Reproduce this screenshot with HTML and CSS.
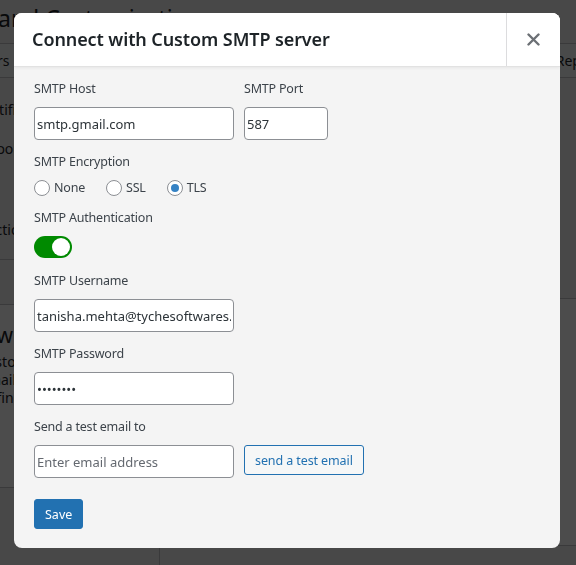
FILE: index.html
```html
<!DOCTYPE html>
<html lang="en">
<head>
    <meta charset="UTF-8">
    <meta name="viewport" content="width=device-width, initial-scale=1.0">
    <title>Email Settings</title>
    <link rel="stylesheet" href="styles.css">
</head>
<body>
    <!-- settings page sitting behind the popup -->
    <div class="page">
        <h1 class="page-title">Brand Customization</h1>
        <div class="tabs">
            <span>Orders</span>
            <span>Reminders</span>
            <span>Reports</span>
        </div>
        <div class="page-body">
            <div class="side">
                <p>Notifications</p>
                <p>Ebook</p>
                <p class="gap">Sections</p>
                <div class="side-card">
                    <h3>Own SMTP</h3>
                    <p>custom</p>
                    <p>email</p>
                    <p>defined</p>
                </div>
            </div>
            <div class="main">
                <div class="panel"></div>
                <h3 class="main-title">Mailgun</h3>
            </div>
        </div>
    </div>

    <div class="overlay">
        <div class="modal">
            <div class="modal-header">
                <h2 class="modal-title">Connect with Custom SMTP server</h2>
                <button class="modal-close" aria-label="Close">
                    <svg width="13" height="13" viewBox="0 0 13 13">
                        <path d="M1.5 1.5 L11.5 11.5 M11.5 1.5 L1.5 11.5" stroke="#6c7075" stroke-width="2.4" stroke-linecap="round"/>
                    </svg>
                </button>
            </div>
            <div class="modal-body">
                <div class="field-row">
                    <div class="field">
                        <label class="field-label">SMTP Host</label>
                        <input class="text-input" type="text" value="smtp.gmail.com">
                    </div>
                    <div class="field">
                        <label class="field-label">SMTP Port</label>
                        <input class="text-input port" type="text" value="587">
                    </div>
                </div>

                <div class="field radios">
                    <label class="field-label">SMTP Encryption</label>
                    <div class="radio-group">
                        <label class="radio"><span class="radio-dot"></span>None</label>
                        <label class="radio"><span class="radio-dot"></span>SSL</label>
                        <label class="radio"><span class="radio-dot checked"></span>TLS</label>
                    </div>
                </div>

                <div class="field switch">
                    <label class="field-label">SMTP Authentication</label>
                    <span class="toggle on"><span class="knob"></span></span>
                </div>

                <div class="field">
                    <label class="field-label">SMTP Username</label>
                    <input class="text-input" type="text" value="tanisha.mehta@tychesoftwares.com">
                </div>

                <div class="field">
                    <label class="field-label">SMTP Password</label>
                    <input class="text-input" type="password" value="password">
                </div>

                <div class="field">
                    <label class="field-label">Send a test email to</label>
                    <div class="test-row">
                        <input class="text-input" type="text" placeholder="Enter email address">
                        <button class="btn-secondary">send a test email</button>
                    </div>
                </div>

                <button class="btn-primary">Save</button>
            </div>
        </div>
    </div>
</body>
</html>
```

FILE: styles.css
```css
* {
    box-sizing: border-box;
}

body {
    margin: 0;
    background: #f0f0f1;
    color: #1d2327;
    font-family: "Noto Sans", "Open Sans", sans-serif;
    overflow: hidden;
    height: 565px;
}

/* page behind */
.page {
    margin-left: -40px;
    width: 648px;
}

.page-title {
    font-size: 23px;
    font-weight: 400;
    margin: 0;
    padding: 2px 0 0 14px;
    height: 43px;
    white-space: nowrap;
}

.tabs {
    display: flex;
    justify-content: space-between;
    height: 35px;
    align-items: center;
    border-top: 1px solid #c3c4c7;
    border-bottom: 1px solid #c3c4c7;
    background: #f6f7f7;
    font-size: 14px;
    padding: 0 1px 0 4px;
}

.page-body {
    display: grid;
    grid-template-columns: 200px 1fr;
}

.side {
    font-size: 14px;
    border-right: 1px solid #c3c4c7;
}

.side p {
    margin: 0;
    padding: 0 0 20px 20px;
}

.side > p:first-child {
    padding-top: 22px;
}

.side .gap {
    padding-top: 42px;
    border-bottom: 1px solid #c3c4c7;
}

.side-card {
    background: #fff;
    margin-top: 44px;
    padding: 16px 0 80px 20px;
    border-top: 1px solid #c3c4c7;
    border-bottom: 1px solid #c3c4c7;
}

.side-card h3 {
    margin: 0 0 4px;
    font-size: 21px;
    font-weight: 400;
}

.side-card p {
    margin: 0;
    padding: 0;
    font-size: 14px;
    line-height: 18px;
}

.main {
    padding: 220px 0 0 20px;
}

.panel {
    background: #fff;
    border: 1px solid #c3c4c7;
    height: 248px;
    margin-right: 16px;
}

.main-title {
    font-size: 23px;
    font-weight: 400;
    margin: 12px 0 0 120px;
}

/* popup */
.overlay {
    position: fixed;
    inset: 0;
    background: rgba(0, 0, 0, 0.7);
    padding: 13px 0 0 14px;
}

.modal {
    width: 546px;
    height: 535px;
    background: #f4f4f4;
    border-radius: 8px;
    overflow: hidden;
}

.modal-header {
    display: flex;
    height: 54px;
    background: #fff;
    border-bottom: 1px solid #e2e2e2;
    box-shadow: 0 1px 3px rgba(0, 0, 0, 0.06);
}

.modal-title {
    flex: 1;
    margin: 0;
    padding: 0 0 0 18px;
    font-size: 18px;
    font-weight: 600;
    line-height: 53px;
    color: #1d2327;
    letter-spacing: -0.1px;
}

.modal-close {
    width: 54px;
    border: 0;
    border-left: 1px solid #dcdcde;
    background: #fff;
    display: flex;
    align-items: center;
    justify-content: center;
    padding: 0;
}

.modal-body {
    padding: 13px 20px 20px;
}

.field-row {
    display: flex;
    gap: 10px;
}

.field {
    margin-bottom: 13px;
}

.field.switch {
    margin-bottom: 14px;
}

.field-label {
    display: block;
    font-size: 12.5px;
    letter-spacing: -0.2px;
    line-height: 18px;
    color: #3c434a;
    margin-bottom: 9px;
}

.text-input {
    display: block;
    width: 200px;
    height: 33px;
    border: 1px solid #8c8f94;
    border-radius: 4px;
    background: #fff;
    padding: 0 2px;
    font-family: inherit;
    font-size: 13px;
    color: #2c3338;
}

.text-input::placeholder {
    color: #646970;
}

.text-input.port {
    width: 84px;
}

.radio-group {
    display: flex;
    gap: 21px;
    margin-top: 9px;
    height: 16px;
}

.radio {
    display: flex;
    align-items: center;
    gap: 4px;
    font-size: 12.5px;
    letter-spacing: -0.2px;
    line-height: 16px;
    color: #3c434a;
}

.radio-dot {
    width: 16px;
    height: 16px;
    border: 1px solid #8c8f94;
    border-radius: 50%;
    background: #fff;
    display: flex;
    align-items: center;
    justify-content: center;
}

.radio-dot.checked::after {
    content: "";
    width: 8px;
    height: 8px;
    border-radius: 50%;
    background: #3582c4;
}

.toggle {
    display: flex;
    justify-content: flex-end;
    align-items: center;
    width: 38px;
    height: 22px;
    border-radius: 11px;
    background: #dcdcde;
    padding: 0 2px;
}

.toggle.on {
    background: #008a00;
}

.knob {
    width: 18px;
    height: 18px;
    border-radius: 50%;
    background: #fff;
}

.test-row {
    display: flex;
    gap: 10px;
    align-items: flex-start;
}

.btn-secondary {
    height: 30px;
    padding: 0 10px;
    border: 1px solid #2271b1;
    border-radius: 3px;
    background: #f6f7f7;
    color: #2271b1;
    font-family: inherit;
    font-size: 12.5px;
    letter-spacing: -0.1px;
}

.btn-primary {
    margin-top: 8px;
    height: 30px;
    padding: 0 10px;
    border: 1px solid #2271b1;
    border-radius: 3px;
    background: #2271b1;
    color: #fff;
    font-family: inherit;
    font-size: 12.5px;
}
```
